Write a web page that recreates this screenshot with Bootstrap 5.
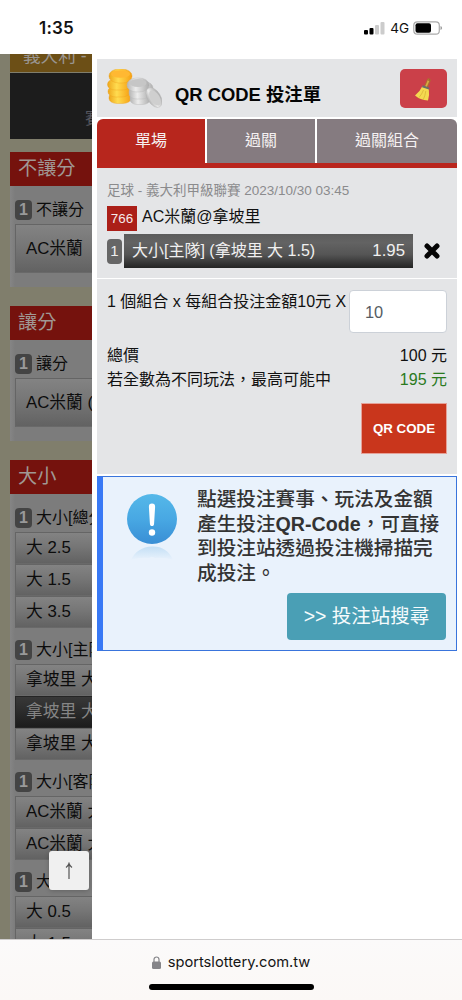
<!DOCTYPE html>
<html lang="zh-Hant">
<head>
<meta charset="utf-8">
<meta name="viewport" content="width=device-width, initial-scale=1">
<title>QR CODE 投注單</title>
<link href="https://cdn.jsdelivr.net/npm/bootstrap@5.3.0/dist/css/bootstrap.min.css" rel="stylesheet">
<style>
body{font-family:"Liberation Sans","Noto Sans CJK TC",sans-serif;font-size:16px;line-height:24px;color:#111;background:#fff}
.phone{height:1000px}
.ui{font-family:Inter,sans-serif}
.statusbar{height:54px;padding:1px 19px 0 39px}
.clock{font-size:17px;font-weight:600;letter-spacing:.2px}
.net{font-size:13.5px;font-weight:400}
.main-area{height:885px}
/* dimmed odds list */
.odds{width:92px;background:#807e6c;padding-left:10px;white-space:nowrap;color:#0c0c0c}
.odds>*{flex:none}
.league{height:18px;background:#6c4f16;color:#999591;font-size:17.6px;line-height:18px;padding-left:13px;margin-bottom:1px}
.league span{display:block;margin-top:-7px}
.match-head{height:66px;background:#1c1c1c;color:#56565e;padding:34px 0 0 75px;margin-bottom:13px}
.group-head{height:34px;background:#75120d;color:#a09894;font-size:19.2px;line-height:34px;padding-left:8px}
.group-body{background:linear-gradient(90deg,#858585,#7c7c7c 5px);padding:14px 0 14px 5px;margin-bottom:19px}
.market{height:20px;gap:4px;margin-bottom:4px}
.market:not(:first-child){margin-top:12px}
.num{flex:none;width:17px;height:20px;border-radius:4px;background:#444;color:#999;line-height:20px;text-align:center;font-size:16px;font-weight:700}
.pick{height:32px;line-height:29px;padding-left:10px;font-size:16.8px;border:1px solid #656565;border-right:0;border-bottom-color:#696969;background:linear-gradient(#838383,#767676 45%,#626262)}
.pick.tall{height:49px;line-height:47px}
.pick.on{background:linear-gradient(#383838,#2b2b2b 50%,#1c1c1c);color:#858585;border-color:#252525}
.totop{position:absolute;left:49px;top:797px;width:40px;height:39px;background:#f0f0f0;border-radius:3px;box-shadow:0 1px 5px #0003}
/* bet slip */
.slip{padding:5px 5px 0}
.slip-head{height:58px;background:#e4e5e7;padding:10px 10px 9px;margin-bottom:2px}
.slip-title{font-size:18.4px;font-weight:700;color:#050505;margin:14px 0 0 13px;line-height:24px}
.clear-btn{width:47px;height:39px;border-radius:5px;background:#cb4049;padding:0}
.slip-tabs{gap:2px;height:49px;border-bottom:5px solid #b9261e}
.slip-tab{background:#857b80;color:#f5f1f2;line-height:43px;text-align:center;width:108px}
.slip-tab.on{background:#b7261d;border-top-left-radius:6px}
.slip-tab:last-child{width:140px;border-top-right-radius:6px}
.sect{background:#e4e5e7;padding:10px}
.bet{height:111px;border-bottom:1px solid #fff}
.event{font-size:13.5px;line-height:25px;height:24px;color:#8b8b8d}
.code{background:#ab1f18;color:#f5eaea;font-size:13.4px;width:30px;height:25px;line-height:25px;text-align:center}
.leg-num{width:15px;height:25px;border-radius:4px;background:#666;color:#eee;text-align:center;line-height:24px;font-size:15px}
.leg{width:289px;height:34px;background:linear-gradient(#5c5c5c,#636363 25%,#555 60%,#242424);color:#f0f0f0;line-height:34px;padding:0 8px;margin-left:2px}
.total{height:197px;border-bottom:2px solid #fff;padding-top:11px}
.mult{width:98px;height:43px;border:1px solid #ccd1d8;border-radius:4px;padding:0 15px;font-size:16.4px;color:#555c63;background:#fff}
.win{color:#2b7a1e}
.qr-btn{width:86px;height:51px;border-radius:0;background:#c9361c;border:1px solid #e5a198;color:#fff;font-size:13.3px;font-weight:700;padding:0}
.tip{height:175px;background:#e9f2fc;border:1px solid #3974dc;border-left:6px solid #3979f5;padding:10px 10px 10px 24px}
.tip-text{font-size:19.65px;line-height:24.7px;font-weight:500;color:#333}
.tip-text b{font-weight:700}
.find-btn{width:159px;height:47px;background:#4a9fb5;color:#f5fbfc;font-size:19.5px;border-radius:4px;padding:0}
.find-btn:hover{background:#43909f}
.addr{height:61px;border-top:1px solid #cfcdcd;background:linear-gradient(#fbfafa,#fbf8f6)}
.addr-text{font-size:14.7px;line-height:20px;color:#151515}
.homebar{width:165px;height:6px;background:#000;border-radius:3px}
</style>
</head>
<body>
<div class="phone d-flex flex-column overflow-hidden">
  <header class="statusbar ui d-flex align-items-center justify-content-between">
    <span class="clock">1:35</span>
    <div class="d-flex align-items-center">
      <svg width="22" height="14" viewBox="0 0 22 14"><rect x="0" y="9" width="4" height="4.5" rx="1"/><rect x="5.5" y="7" width="4" height="6.5" rx="1"/><rect x="11" y="4" width="4" height="9.5" rx="1" fill="#ccc"/><rect x="16.5" y="1" width="4" height="12.5" rx="1" fill="#ccc"/></svg>
      <span class="net ms-1 me-1">4G</span>
      <svg width="30" height="14" viewBox="0 0 30 14"><rect x=".8" y=".8" width="25.5" height="12.4" rx="3.5" fill="#fff" stroke="#aaa" stroke-width="1.2"/><rect x="2.5" y="2.3" width="15.5" height="9.4" rx="2"/><path d="M27.5 5v4q1.6-.5 1.6-2t-1.6-2" fill="#999"/></svg>
    </div>
  </header>

  <div class="main-area d-flex position-relative overflow-hidden">
    <aside class="odds d-flex flex-column overflow-hidden flex-shrink-0 h-100">
      <div class="league overflow-hidden"><span>義大利 - 義</span></div>
      <div class="match-head overflow-hidden">賽</div>

      <div class="group-head">不讓分</div>
      <div class="group-body">
        <div class="market d-flex align-items-center"><span class="num">1</span>不讓分</div>
        <div class="pick tall">AC米蘭</div>
      </div>

      <div class="group-head">讓分</div>
      <div class="group-body">
        <div class="market d-flex align-items-center"><span class="num">1</span>讓分</div>
        <div class="pick tall">AC米蘭 (</div>
      </div>

      <div class="group-head">大小</div>
      <div class="group-body">
        <div class="market d-flex align-items-center"><span class="num">1</span>大小[總分</div>
        <div class="pick">大 2.5</div>
        <div class="pick">大 1.5</div>
        <div class="pick">大 3.5</div>
        <div class="market d-flex align-items-center"><span class="num">1</span>大小[主隊</div>
        <div class="pick">拿坡里 大</div>
        <div class="pick on">拿坡里 大</div>
        <div class="pick">拿坡里 大</div>
        <div class="market d-flex align-items-center"><span class="num">1</span>大小[客隊</div>
        <div class="pick">AC米蘭 大</div>
        <div class="pick">AC米蘭 大</div>
        <div class="market d-flex align-items-center"><span class="num">1</span>大小[半</div>
        <div class="pick">大 0.5</div>
        <div class="pick">大 1.5</div>
      </div>
    </aside>
    <a class="totop d-flex align-items-center justify-content-center" href="#" aria-label="top">
      <svg width="10" height="18" viewBox="0 0 10 18" fill="none" stroke="#555" stroke-width="1.2"><path d="M5 17V2M2 5.500Q4.200 4 5 1.500Q5.800 4 8 5.500"/></svg>
    </a>

    <main class="slip flex-grow-1">
      <div class="slip-head d-flex justify-content-between">
        <div class="d-flex">
          <svg width="55" height="40" viewBox="0 0 55 40">
            <defs>
              <linearGradient id="gold"><stop offset="0" stop-color="#eda61c"/><stop offset=".4" stop-color="#ffdc50"/><stop offset="1" stop-color="#f6a013"/></linearGradient>
              <linearGradient id="silver"><stop offset="0" stop-color="#b4b4b4"/><stop offset=".4" stop-color="#ececec"/><stop offset="1" stop-color="#adadad"/></linearGradient>
            </defs>
            <g fill="url(#gold)" stroke="#ee9d17" stroke-width=".5" stroke-opacity=".7">
              <rect x="2" y="23" width="22" height="11.500" rx="8" ry="5"/><rect x="1" y="17" width="22" height="11" rx="8" ry="5"/><rect x=".5" y="10" width="23" height="11" rx="8" ry="5"/><rect x="2" y="0" width="23" height="14" rx="10" ry="6.500"/></g>
            <ellipse cx="13.500" cy="5" rx="9.500" ry="3.800" fill="#ffb832"/>
            <g fill="url(#silver)" stroke="#b5b5b5" stroke-width=".4">
              <rect x="23" y="23" width="20" height="12.500" rx="7" ry="5"/><rect x="29" y="13" width="17" height="13" rx="7" ry="6"/><rect x="22" y="17" width="21" height="13" rx="8" ry="5"/><rect x="20" y="9" width="22" height="14" rx="10" ry="6.500"/>
              <ellipse cx="47" cy="28.500" rx="6.500" ry="11" transform="rotate(-32 47 28.500)"/></g>
            <ellipse cx="31" cy="14" rx="8.500" ry="4" fill="#c6c6c6"/>
            <ellipse cx="48" cy="29" rx="4.500" ry="8.500" transform="rotate(-32 48 29)" fill="#cfcfcf"/>
          </svg>
          <h1 class="slip-title">QR CODE 投注單</h1>
        </div>
        <button class="btn clear-btn d-flex align-items-center justify-content-center border-0" aria-label="clear">
          <svg width="20" height="24" viewBox="0 0 20 24">
            <path d="M12 10 14.800 3.200" stroke="#a8712a" stroke-width="3.600" stroke-linecap="round"/><path d="M12.200 9 14.800 3" stroke="#d9a845" stroke-width="1.800" stroke-linecap="round"/><circle cx="15" cy="3" r=".8" fill="#8d3a2a"/>
            <path d="M8.200 9.500 14.800 12q.9 6-.8 11.500Q6 23 1 18.500 6 14.500 8.200 9.500" fill="#f4da50"/>
            <path d="M9.500 13Q8 17 5 20.500M11.800 14q-.7 5-2.500 8.500" stroke="#d9ae35" fill="none" stroke-width=".7"/>
            <path d="m8.400 9.200 6.800 2.400" stroke="#6a6f6b" stroke-width="2"/>
          </svg>
        </button>
      </div>

      <nav class="slip-tabs d-flex">
        <div class="slip-tab on">單場</div><div class="slip-tab">過關</div><div class="slip-tab">過關組合</div>
      </nav>

      <section class="sect bet">
        <div class="event">足球 - 義大利甲級聯賽 2023/10/30 03:45</div>
        <div class="d-flex" style="margin-top:4px"><span class="code">766</span><span style="margin-left:5px;line-height:22px">AC米蘭@拿坡里</span></div>
        <div class="d-flex align-items-center" style="margin-top:3px">
          <span class="leg-num">1</span>
          <div class="leg d-flex justify-content-between"><span>大小[主隊] (拿坡里 大 1.5)</span><span style="font-size:16.8px">1.95</span></div>
          <svg width="18" height="18" viewBox="0 0 18 18" style="margin-left:10px"><path d="M4 4 14 14M14 4 4 14" stroke="#050505" stroke-width="5" stroke-linecap="round"/></svg>
        </div>
      </section>

      <section class="sect total">
        <div class="d-flex justify-content-between">
          <span class="text-nowrap">1 個組合 x 每組合投注金額10元 X</span>
          <div class="mult d-flex align-items-center flex-shrink-0">10</div>
        </div>
        <div class="d-flex justify-content-between" style="margin-top:11px"><span>總價</span><span>100 元</span></div>
        <div class="d-flex justify-content-between"><span>若全數為不同玩法，最高可能中</span><span class="win">195 元</span></div>
        <div class="d-flex justify-content-end" style="margin-top:11px"><button class="btn qr-btn">QR CODE</button></div>
      </section>

      <section class="tip">
        <div class="d-flex">
          <svg width="50" height="78" viewBox="0 0 50 78" class="flex-shrink-0" style="margin-top:7px">
            <defs>
              <linearGradient id="blue" x2="0" y2="1"><stop stop-color="#55b8e9"/><stop offset=".5" stop-color="#48a8e3"/><stop offset="1" stop-color="#398ed5"/></linearGradient>
              <linearGradient id="refl" x2="0" y2="1"><stop stop-color="#c3dff5"/><stop offset="1" stop-color="#e9f2fc"/></linearGradient>
            </defs>
            <circle cx="25" cy="25" r="25" fill="url(#blue)"/>
            <path d="M25 9.500c2.300 0 3.200 1.300 3.100 3.500l-1 16.500c-.1 1.800-.8 2.600-2.100 2.600s-2-.8-2.100-2.600l-1-16.500c-.1-2.200.8-3.500 3.100-3.500" fill="#fff"/><circle cx="25" cy="38.500" r="3.200" fill="#fff"/>
            <path d="M4 66Q10 53 25 52.500T46 66Q37 63 28 64q-3-2-6 0-9-1-18 2" fill="url(#refl)"/>
          </svg>
          <div class="tip-text text-nowrap" style="margin-left:20px">點選投注賽事、玩法及金額<br>產生投注<b>QR-Code</b>，可直接<br>到投注站透過投注機掃描完<br>成投注。</div>
        </div>
        <div class="d-flex justify-content-end" style="margin-top:7px"><button class="btn find-btn">&gt;&gt; 投注站搜尋</button></div>
      </section>
    </main>
  </div>

  <footer class="addr ui d-flex flex-column align-items-center">
    <div class="d-flex align-items-center" style="margin-top:12px;gap:7px">
      <svg width="9" height="13" viewBox="0 0 9 13"><rect y="5.500" width="9" height="7.500" rx="1.500" fill="#858589"/><path d="M2 6V3.500a2.500 2.500 0 0 1 5 0V6" fill="none" stroke="#858589" stroke-width="1.200"/></svg>
      <span class="addr-text">sportslottery.com.tw</span>
    </div>
    <div class="homebar" style="margin-top:12px"></div>
  </footer>
</div>
<script src="https://cdn.jsdelivr.net/npm/bootstrap@5.3.0/dist/js/bootstrap.bundle.min.js"></script>
</body>
</html>
